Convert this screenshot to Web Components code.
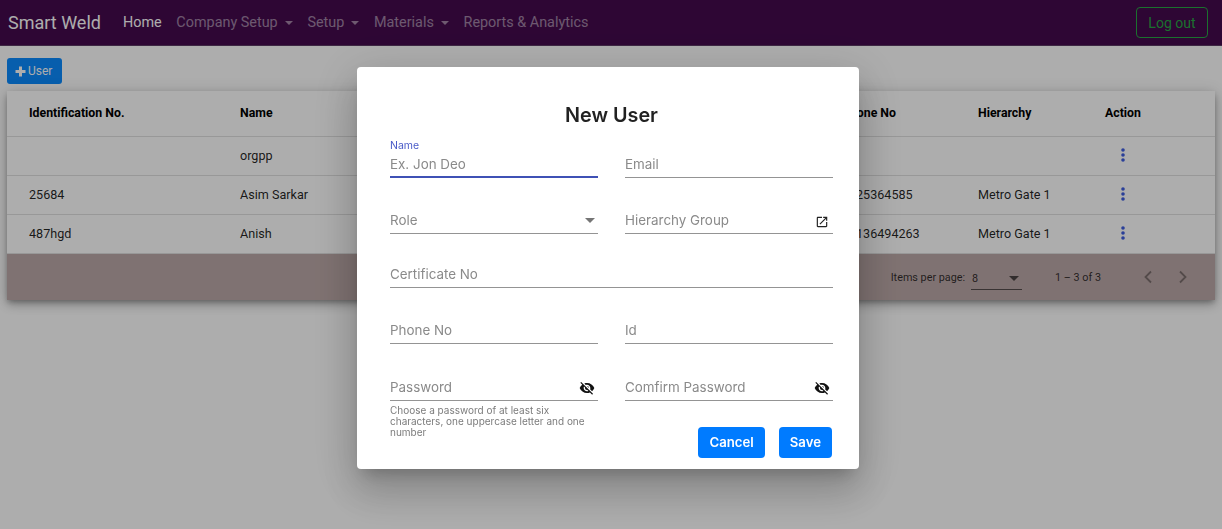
<!DOCTYPE html>
<html>
<head>
<meta charset="utf-8">
<title>Smart Weld</title>
<style>
  html, body { margin: 0; height: 100%; background: #fff; font-family: Roboto, "Liberation Sans", sans-serif; overflow: hidden; }
</style>
</head>
<body>
<app-navbar>
  <nav-link slot="links" active>Home</nav-link>
  <nav-link slot="links" caret>Company Setup</nav-link>
  <nav-link slot="links" caret>Setup</nav-link>
  <nav-link slot="links" caret>Materials</nav-link>
  <nav-link slot="links">Reports &amp; Analytics</nav-link>
</app-navbar>
<user-page>
  <add-button slot="toolbar">User</add-button>
  <user-table slot="table">
    <table-row head>
      <span>Identification No.</span><span>Name</span><span>Phone No</span><span>Hierarchy</span><span>Action</span>
    </table-row>
    <table-row>
      <span></span><span>orgpp</span><span></span><span></span><row-menu></row-menu>
    </table-row>
    <table-row>
      <span>25684</span><span>Asim Sarkar</span><span class="num">25364585</span><span>Metro Gate 1</span><row-menu></row-menu>
    </table-row>
    <table-row>
      <span>487hgd</span><span>Anish</span><span class="num">136494263</span><span>Metro Gate 1</span><row-menu></row-menu>
    </table-row>
    <table-pager slot="footer"></table-pager>
  </user-table>
</user-page>
<modal-dialog heading="New User">
  <form-row style="--top:0px">
    <form-field label="Ex. Jon Deo" floating="Name" focused></form-field>
    <form-field label="Email"></form-field>
  </form-row>
  <form-row style="--top:14px">
    <form-field label="Role" icon="caret"></form-field>
    <form-field label="Hierarchy Group" icon="open"></form-field>
  </form-row>
  <form-row style="--top:12px">
    <form-field label="Certificate No"></form-field>
  </form-row>
  <form-row style="--top:14px">
    <form-field label="Phone No"></form-field>
    <form-field label="Id"></form-field>
  </form-row>
  <form-row style="--top:15px">
    <form-field label="Password" icon="eye" hint="Choose a password of at least six characters, one uppercase letter and one number"></form-field>
    <form-field label="Comfirm Password" icon="eye"></form-field>
  </form-row>
  <primary-button slot="actions">Cancel</primary-button>
  <primary-button slot="actions">Save</primary-button>
</modal-dialog>

<script>
  const COLUMNS = "211px 602px 136px 127px 1fr";

  const ICONS = {
    eye: `<svg width="16" height="16" viewBox="0 0 24 24" fill="#111"><path d="M12 7c2.76 0 5 2.24 5 5 0 .65-.13 1.26-.36 1.83l2.92 2.92c1.51-1.26 2.7-2.89 3.43-4.75-1.73-4.39-6-7.5-11-7.5-1.4 0-2.74.25-3.98.7l2.16 2.16C10.74 7.13 11.35 7 12 7zM2 4.27l2.28 2.28.46.46C3.08 8.3 1.78 10.02 1 12c1.73 4.39 6 7.5 11 7.5 1.55 0 3.03-.3 4.38-.84l.42.42L19.73 22 21 20.73 3.27 3 2 4.27zM7.53 9.8l1.55 1.55c-.05.21-.08.43-.08.65 0 1.66 1.34 3 3 3 .22 0 .44-.03.65-.08l1.55 1.55c-.67.33-1.41.53-2.2.53-2.76 0-5-2.24-5-5 0-.79.2-1.53.53-2.2zm4.31-.78l3.15 3.15.02-.16c0-1.66-1.34-3-3-3l-.17.01z"/></svg>`,
    open: `<svg width="14" height="14" viewBox="0 0 24 24" fill="#222"><path d="M19 19H5V5h7V3H5c-1.11 0-2 .9-2 2v14c0 1.1.89 2 2 2h14c1.1 0 2-.9 2-2v-7h-2v7zM14 3v2h3.59l-9.83 9.83 1.41 1.41L19 6.41V10h2V3h-7z"/></svg>`,
    caret: `<svg width="10" height="5" viewBox="0 0 10 5" fill="#757575"><path d="M0 0h10L5 5z"/></svg>`
  };

  class AppNavbar extends HTMLElement {
    constructor() {
      super();
      this.attachShadow({ mode: "open" }).innerHTML = `
        <style>
          :host { display: flex; align-items: center; height: 46px; box-sizing: border-box; background: #44094d; padding: 0 14px 0 8px; border-bottom: 1px solid #5c3a63; }
          .brand { font-size: 18px; color: #fff; margin-right: 22px; }
          .links { display: flex; flex: 1; gap: 14.7px; }
          .logout { font-size: 14px; color: #28a745; border: 1px solid #28a745; border-radius: 4px; padding: 0 11.5px; height: 31px; line-height: 30px; box-sizing: border-box; }
        </style>
        <span class="brand">Smart Weld</span>
        <div class="links"><slot name="links"></slot></div>
        <span class="logout">Log out</span>`;
    }
  }

  class NavLink extends HTMLElement {
    constructor() {
      super();
      this.attachShadow({ mode: "open" }).innerHTML = `
        <style>
          :host { display: inline-flex; align-items: center; font-size: 14.4px; color: rgba(255,255,255,.5); }
          :host([active]) { color: #fff; }
          .caret { display: none; margin-left: 7px; border-top: 4.5px solid currentColor; border-left: 4.5px solid transparent; border-right: 4.5px solid transparent; }
          :host([caret]) .caret { display: block; }
        </style>
        <slot></slot><i class="caret"></i>`;
    }
  }

  class UserPage extends HTMLElement {
    constructor() {
      super();
      this.attachShadow({ mode: "open" }).innerHTML = `
        <style>
          :host { display: flex; flex-direction: column; gap: 7px; padding: 12px 7px 0; }
        </style>
        <div><slot name="toolbar"></slot></div>
        <slot name="table"></slot>`;
    }
  }

  class AddButton extends HTMLElement {
    constructor() {
      super();
      this.attachShadow({ mode: "open" }).innerHTML = `
        <style>
          :host { display: inline-flex; align-items: center; gap: 2px; height: 26px; width: 55px; box-sizing: border-box; padding-left: 8px; background: #0b8bff; color: #fff; border-radius: 3px; font-size: 12px; }
          svg { display: block; }
        </style>
        <svg width="11" height="11" viewBox="0 0 11 11" fill="#fff"><path d="M4 0.5h3V4h3.5v3H7v3.5H4V7H0.5V4H4z"/></svg>
        <slot></slot>`;
    }
  }

  class UserTable extends HTMLElement {
    constructor() {
      super();
      this.attachShadow({ mode: "open" }).innerHTML = `
        <style>
          :host { display: block; background: #fff; box-shadow: 0 3px 5px -1px rgba(0,0,0,.25), 0 5px 10px rgba(0,0,0,.18), 0 1px 14px rgba(0,0,0,.14); }
        </style>
        <slot></slot>
        <slot name="footer"></slot>`;
    }
  }

  class TableRow extends HTMLElement {
    constructor() {
      super();
      this.attachShadow({ mode: "open" }).innerHTML = `
        <style>
          :host { display: grid; grid-template-columns: ${COLUMNS}; align-items: center; height: 39px; box-sizing: border-box; padding: 0 0 2px 22px; border-bottom: 1px solid #e0e0e0; font-size: 12.6px; color: rgba(0,0,0,.87); }
          :host([head]) { height: 46px; padding-bottom: 1px; font-size: 12.3px; font-weight: 700; color: #000; }
          ::slotted(.num) { padding-left: 14px; }
        </style>
        <slot></slot>`;
    }
  }

  class RowMenu extends HTMLElement {
    constructor() {
      super();
      this.attachShadow({ mode: "open" }).innerHTML = `
        <style>
          :host { display: block; padding-left: 15px; }
          svg { display: block; }
        </style>
        <svg width="6" height="14" viewBox="0 0 6 14" fill="#3f5ee0"><circle cx="3" cy="2" r="1.8"/><circle cx="3" cy="7" r="1.8"/><circle cx="3" cy="12" r="1.8"/></svg>`;
    }
  }

  class TablePager extends HTMLElement {
    constructor() {
      super();
      this.attachShadow({ mode: "open" }).innerHTML = `
        <style>
          :host { display: flex; align-items: center; justify-content: flex-end; height: 46px; background: #bca9a8; font-size: 10.8px; color: rgba(0,0,0,.75); padding-right: 26px; }
          .size { display: flex; align-items: center; justify-content: space-between; width: 51px; height: 22px; margin: 3px 0 0 6px; box-sizing: border-box; border-bottom: 1px solid rgba(0,0,0,.55); padding: 0 3px 0 1px; }
          .range { margin: 0 41px 0 33px; }
          .nav { display: flex; gap: 23px; }
          svg { display: block; }
        </style>
        <span>Items per page:</span>
        <div class="size"><span>8</span>${ICONS.caret.replace("#757575", "rgba(0,0,0,.6)")}</div>
        <span class="range">1 – 3 of 3</span>
        <div class="nav">
          <svg width="12" height="14" viewBox="0 0 12 14" fill="none" stroke="rgba(0,0,0,.35)" stroke-width="1.8"><path d="M9 1.5 3.5 7 9 12.5"/></svg>
          <svg width="12" height="14" viewBox="0 0 12 14" fill="none" stroke="rgba(0,0,0,.35)" stroke-width="1.8"><path d="M3 1.5 8.5 7 3 12.5"/></svg>
        </div>`;
    }
  }

  class ModalDialog extends HTMLElement {
    constructor() {
      super();
      this.attachShadow({ mode: "open" }).innerHTML = `
        <style>
          :host { position: fixed; inset: 0; background: rgba(0,0,0,.32); font-family: Inter, Roboto, sans-serif; }
          .box { position: absolute; left: 357px; top: 67px; width: 502px; height: 402px; box-sizing: border-box; padding: 36px 26px 0 33px; background: #fff; border-radius: 4px; box-shadow: 0 11px 15px -7px rgba(0,0,0,.2), 0 24px 38px 3px rgba(0,0,0,.14), 0 9px 46px 8px rgba(0,0,0,.12); }
          h2 { margin: 0 0 8px; height: 25px; text-align: center; font: 600 19.8px/25px Inter, Roboto, sans-serif; color: rgba(0,0,0,.87); }
          .actions { position: absolute; right: 27px; bottom: 11px; display: flex; gap: 14px; }
        </style>
        <div class="box">
          <h2></h2>
          <slot></slot>
          <div class="actions"><slot name="actions"></slot></div>
        </div>`;
    }
    connectedCallback() {
      this.shadowRoot.querySelector("h2").textContent = this.getAttribute("heading");
    }
  }

  class FormRow extends HTMLElement {
    constructor() {
      super();
      this.attachShadow({ mode: "open" }).innerHTML = `
        <style>
          :host { display: flex; gap: 27px; margin-top: var(--top); }
          ::slotted(*) { flex: 1; min-width: 0; }
        </style>
        <slot></slot>`;
    }
  }

  class FormField extends HTMLElement {
    constructor() {
      super();
      this.attachShadow({ mode: "open" }).innerHTML = `
        <style>
          :host { display: block; position: relative; }
          .box { position: relative; height: 42px; box-sizing: border-box; border-bottom: 1px solid #949494; display: flex; align-items: flex-end; justify-content: space-between; padding-bottom: 4px; }
          :host([focused]) .box { border-bottom: 2px solid #3f51b5; padding-bottom: 3px; }
          .label { font-size: 13.4px; line-height: 18px; color: #8a8a8a; }
          .float { position: absolute; left: 0; top: 4px; font-size: 10.5px; line-height: 12px; color: #4a5bc8; }
          .icon { display: flex; align-items: center; justify-content: center; width: 16px; height: 16px; margin-right: 3px; margin-bottom: 0; }
          .icon.open { margin-bottom: -1px; }
          .icon.caret { margin: 0 0 1px; }
          .hint { position: absolute; top: 46px; left: 0; right: 0; font-size: 10px; line-height: 10.8px; color: #7c7c7c; }
        </style>
        <div class="box"><span class="label"></span></div>`;
    }
    connectedCallback() {
      const box = this.shadowRoot.querySelector(".box");
      this.shadowRoot.querySelector(".label").textContent = this.getAttribute("label");
      if (this.hasAttribute("floating")) {
        const f = document.createElement("span");
        f.className = "float";
        f.textContent = this.getAttribute("floating");
        box.append(f);
      }
      if (this.hasAttribute("icon")) {
        const i = document.createElement("span");
        i.className = "icon " + this.getAttribute("icon");
        i.innerHTML = ICONS[this.getAttribute("icon")];
        box.append(i);
      }
      if (this.hasAttribute("hint")) {
        const h = document.createElement("div");
        h.className = "hint";
        h.textContent = this.getAttribute("hint");
        this.shadowRoot.append(h);
      }
    }
  }

  class PrimaryButton extends HTMLElement {
    constructor() {
      super();
      this.attachShadow({ mode: "open" }).innerHTML = `
        <style>
          :host { display: inline-flex; align-items: center; height: 31px; box-sizing: border-box; padding: 0 11px 2px; background: #007bff; color: #fff; border-radius: 4px; font: 600 13.2px Inter, Roboto, sans-serif; }
        </style>
        <slot></slot>`;
    }
  }

  customElements.define("app-navbar", AppNavbar);
  customElements.define("nav-link", NavLink);
  customElements.define("user-page", UserPage);
  customElements.define("add-button", AddButton);
  customElements.define("user-table", UserTable);
  customElements.define("table-row", TableRow);
  customElements.define("row-menu", RowMenu);
  customElements.define("table-pager", TablePager);
  customElements.define("modal-dialog", ModalDialog);
  customElements.define("form-row", FormRow);
  customElements.define("form-field", FormField);
  customElements.define("primary-button", PrimaryButton);
</script>
</body>
</html>
